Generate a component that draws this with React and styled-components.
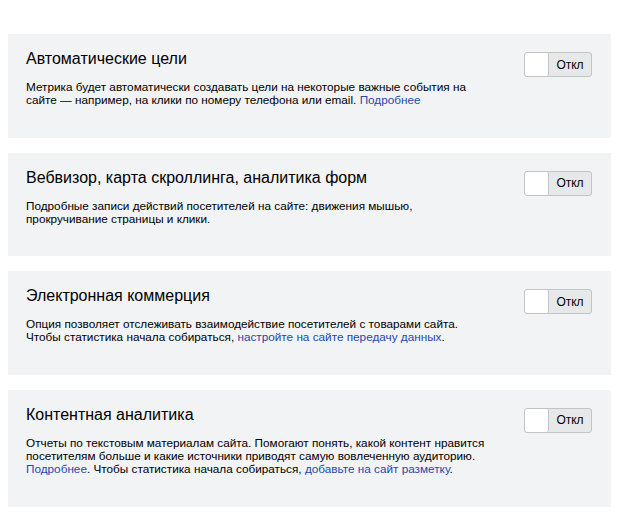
import { useState } from "react";
import styled, { createGlobalStyle } from "styled-components";

const Global = createGlobalStyle`
  body {
    margin: 0;
    background: #fff;
    font-family: "Liberation Sans", Arial, sans-serif;
    color: #000;
  }
`;

const Page = styled.div`
  display: flex;
  flex-direction: column;
  row-gap: 15px;
  padding: 34px 17px 12px 8px;
`;

const Card = styled.section`
  display: flex;
  justify-content: space-between;
  align-items: flex-start;
  background: #f2f3f5;
  box-sizing: border-box;
  padding: 18px 19px 31px 18px;
`;

const Body = styled.div`
  display: flex;
  flex-direction: column;
  row-gap: 11px;
  margin-top: -3px;
`;

const Title = styled.h2`
  margin: 0;
  font-size: 16px;
  font-weight: normal;
  line-height: 20px;
`;

const Text = styled.p`
  margin: 0;
  font-size: 11.75px;
  line-height: 13.3px;
  white-space: nowrap;
`;

const Link = styled.a`
  color: #2349ad;
  text-decoration: none;
`;

const Toggle = styled.button`
  display: flex;
  width: 68px;
  height: 25px;
  padding: 0;
  border: 1px solid #c4c4c4;
  border-radius: 3px;
  background: #e7e8ea;
  cursor: pointer;
  overflow: hidden;
  flex-shrink: 0;
`;

const Knob = styled.span`
  width: 24px;
  height: 100%;
  background: #fff;
  border-right: 1px solid #c4c4c4;
  border-radius: 2px;
  box-sizing: border-box;
`;

const ToggleLabel = styled.span`
  flex: 1;
  align-self: center;
  text-align: center;
  font-family: "Liberation Sans", Arial, sans-serif;
  font-size: 12px;
  color: #000;
`;

const Switch = () => {
  const [on, setOn] = useState(false);
  return (
    <Toggle onClick={() => setOn(!on)}>
      <Knob />
      <ToggleLabel>{on ? "Вкл" : "Откл"}</ToggleLabel>
    </Toggle>
  );
};

const items = [
  {
    title: "Автоматические цели",
    text: (
      <>
        Метрика будет автоматически создавать цели на некоторые важные события на
        <br />
        сайте — например, на клики по номеру телефона или email.{" "}
        <Link href="#">Подробнее</Link>
      </>
    ),
  },
  {
    title: "Вебвизор, карта скроллинга, аналитика форм",
    text: (
      <>
        Подробные записи действий посетителей на сайте: движения мышью,
        <br />
        прокручивание страницы и клики.
      </>
    ),
  },
  {
    title: "Электронная коммерция",
    text: (
      <>
        Опция позволяет отслеживать взаимодействие посетителей с товарами сайта.
        <br />
        Чтобы статистика начала собираться,{" "}
        <Link href="#">настройте на сайте передачу данных</Link>.
      </>
    ),
  },
  {
    title: "Контентная аналитика",
    text: (
      <>
        Отчеты по текстовым материалам сайта. Помогают понять, какой контент нравится
        <br />
        посетителям больше и какие источники приводят самую вовлеченную аудиторию.
        <br />
        <Link href="#">Подробнее</Link>. Чтобы статистика начала собираться,{" "}
        <Link href="#">добавьте на сайт разметку</Link>.
      </>
    ),
  },
];

export default function App() {
  return (
    <>
      <Global />
      <Page>
        {items.map((it) => (
          <Card key={it.title}>
            <Body>
              <Title>{it.title}</Title>
              <Text>{it.text}</Text>
            </Body>
            <Switch />
          </Card>
        ))}
      </Page>
    </>
  );
}
